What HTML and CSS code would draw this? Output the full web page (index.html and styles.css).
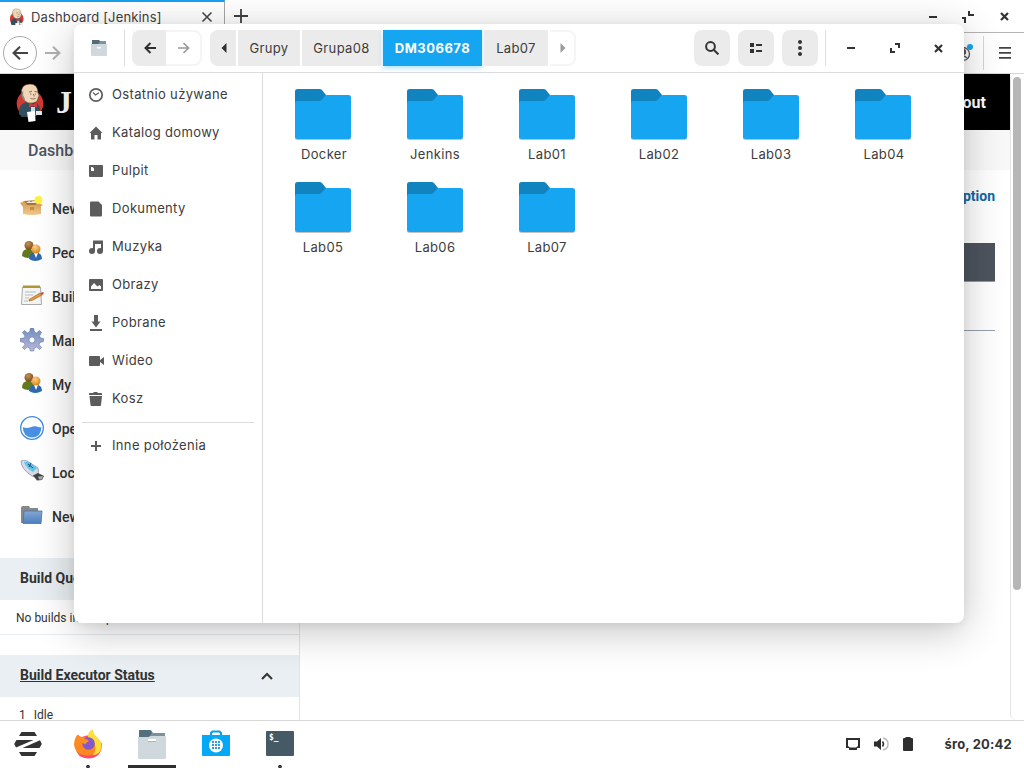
FILE: index.html
```html
<!DOCTYPE html>
<html lang="pl">
<head>
<meta charset="utf-8">
<title>Pulpit</title>
<link rel="stylesheet" href="styles.css">
</head>
<body>
<svg width="0" height="0" class="defs">
  <defs>
    <linearGradient id="cloth" x1="0" y1="0" x2="0" y2="1"><stop offset="0" stop-color="#84a9d6"/><stop offset="1" stop-color="#4b7fbd"/></linearGradient>
    <linearGradient id="box" x1="0" y1="0" x2="0" y2="1"><stop offset="0" stop-color="#dba660"/><stop offset="1" stop-color="#f2c88c"/></linearGradient>
    <linearGradient id="gear" x1="0" y1="0" x2="0" y2="1"><stop offset="0" stop-color="#6f8fbe"/><stop offset="1" stop-color="#b9b6dc"/></linearGradient>
    <linearGradient id="fox" x1="0.8" y1="0" x2="0.4" y2="1"><stop offset="0" stop-color="#ffe43a"/><stop offset=".45" stop-color="#ff9a1f"/><stop offset="1" stop-color="#ff4b47"/></linearGradient>
    <radialGradient id="brown" cx=".4" cy=".3" r=".7"><stop offset="0" stop-color="#c0935a"/><stop offset="1" stop-color="#7a4b12"/></radialGradient>
    <radialGradient id="amber" cx=".4" cy=".3" r=".7"><stop offset="0" stop-color="#ffd08a"/><stop offset="1" stop-color="#d9861c"/></radialGradient>
    <symbol id="folder" viewBox="0 0 56 51">
      <rect y="7" width="56" height="44" rx="2.5" fill="#c9c1bd"/>
      <path d="M0 14V2.500Q0 0 2.500 0H24.500Q26 0 27 1L31 6V14Z" fill="#1183bf"/>
      <path d="M0 14.500Q0 12 2.500 12H23.500Q25.500 12 26.500 11L30 7Q31 6 32 6H53.500Q56 6 56 8.500V47.500Q56 50 53.500 50H2.500Q0 50 0 47.500Z" fill="#16a5f1"/>
    </symbol>
    <symbol id="butler" viewBox="0 0 28 39">
      <ellipse cx="14" cy="20.500" rx="13.300" ry="13.500" fill="#d33833"/>
      <path d="M3 31Q2 23 8 20L14 18L21 20Q25 24 24 30L20 33L6 34Z" fill="#335061"/>
      <path d="M5.500 11Q4.500 1 14 1Q22 1 22 10Q24 13 22 15Q22 19 17 20Q12 21 9 18Q6 16 5.500 11Z" fill="#f0d6b7" stroke="#49311d" stroke-width=".5"/>
      <path d="M5.500 13Q5.500 9 7.500 8L7 12L9 16L8.500 18Z" fill="#8b8a85"/>
      <path d="M13 9l3-.7M18.500 8.500l2.500 .3M14 11h1.500M19 11h1M14.500 15.500q3 1 5 0M17.500 11l.8 2.500" stroke="#6d5846" stroke-width=".8" fill="none"/>
      <path d="M13 19.500l4 2 4-2v5l-4-1.500-4 1.500Z" fill="#d33833"/>
      <path d="M15 24h4v5h-4Z" fill="#c9dbe7"/>
      <path d="M11 29l8-1 .5 10-7 1Z" fill="#fff"/>
      <path d="M20 28h6v4h-6Z" fill="#e4e9ed"/>
    </symbol>
    <symbol id="people" viewBox="0 0 24 24">
      <path d="M2 16Q2 9 8 9Q14 9 14 16Q8 20 2 16Z" fill="#63791f"/>
      <circle cx="9" cy="5.500" r="4.500" fill="url(#brown)"/>
      <path d="M9 19Q9 13 15.500 12.500Q22 12.500 22 19Q15 23 9 19Z" fill="#2f68ad"/>
      <path d="M14 13h4l-2 5Z" fill="#fff"/>
      <circle cx="16" cy="9" r="4.500" fill="url(#amber)"/>
    </symbol>
  </defs>
</svg>

<div class="desktop">
  <div class="browser">
    <div class="tabbar">
      <div class="tab">
        <svg class="favicon" width="14" height="17" viewBox="1 0 27 32"><use href="#butler" width="28" height="39"/></svg>
        <span class="tab-title">Dashboard [Jenkins]</span>
        <svg width="12" height="12" viewBox="0 0 12 12" fill="none" stroke="#484848" stroke-width="1.600"><path d="M1.500 1.500l9 9M10.500 1.500l-9 9"/></svg>
      </div>
      <svg class="plus" width="14" height="14" viewBox="0 0 14 14" stroke="#404040" stroke-width="1.800"><path d="M7 0v14M0 7h14"/></svg>
      <div class="browser-controls">
        <svg width="8" height="13" viewBox="0 0 8 13"><path d="M0 6h8v2H0Z" fill="#333"/></svg>
        <svg width="13" height="13" viewBox="0 0 13 13" fill="none" stroke="#333" stroke-width="2"><path d="M8 1v4h5M1 8h3v5"/></svg>
        <svg width="9" height="9" viewBox="0 0 9 9" stroke="#333" stroke-width="2.200"><path d="M1 1l7 7M8 1l-7 7"/></svg>
      </div>
    </div>
    <div class="navbar">
      <div class="nav-back"><svg width="16" height="14" viewBox="0 0 16 14" fill="none" stroke="#444" stroke-width="2"><path d="M16 7H1.500M8 .7L1.500 7L8 13.300"/></svg></div>
      <svg width="16" height="14" viewBox="0 0 16 14" fill="none" stroke="#b2b2b2" stroke-width="2"><path d="M0 7h14.500M8 .7L14.500 7L8 13.300"/></svg>
      <div class="nav-tools">
        <svg width="20" height="20" viewBox="0 0 20 20" fill="none" stroke="#555" stroke-width="1.300"><circle cx="8" cy="11" r="6.500"/><circle cx="8" cy="9" r="2.500" fill="#555"/><path d="M4 15q4-4 8 0"/><circle cx="15" cy="4" r="3" fill="#16a5f1" stroke="none"/></svg>
        <span class="nav-sep"></span>
        <svg width="12" height="12" viewBox="0 0 12 12" fill="#444"><path d="M0 0h12v1.800H0ZM0 5h12v1.800H0ZM0 10h12v1.800H0Z"/></svg>
      </div>
    </div>
    <div class="viewport">
      <div class="page">
        <div class="masthead">
          <svg width="28" height="39" viewBox="0 0 28 39"><use href="#butler" width="28" height="39"/></svg>
          <span class="brand">Jenkins</span>
          <span class="logout">log out</span>
        </div>
        <div class="crumbs">Dashboard</div>
        <div class="content">
          <div class="side">
            <div class="tasks">
              <div class="task"><svg width="24" height="24" viewBox="0 0 24 24"><path d="M3 9H21V18Q12 20 3 18Z" fill="url(#box)"/><path d="M4 5L18 4L21 9H3Z" fill="#a67332"/><path d="M6 7q3-3 5-1q4-3 7 1Z" fill="#e9e5dc"/><path d="M0 7l4-2 3 4-4 2ZM23 9l-4 2-4-2 4-2Z" fill="#dba75f"/><path d="M10 11h4v3h-4Z" fill="#c88b45"/><circle cx="18.500" cy="4" r="4" fill="#fff23f"/></svg>New Item</div>
              <div class="task"><svg width="24" height="24"><use href="#people" width="24" height="24"/></svg>People</div>
              <div class="task"><svg width="24" height="24" viewBox="0 0 24 24"><path d="M2.500 3H20.500L21.500 20.500H1.500Z" fill="#f4f4f4" stroke="#aaa"/><path d="M3 1.500h17v2.500H3Z" fill="#a99a32"/><path d="M5 8h11M5 11h8M5 14h4M4 17h4" stroke="#bbb"/><path d="M9 15.500L20 9l2 2-10 5.500-3 .5Z" fill="#e49a3c" stroke="#9a631c" stroke-width=".6"/><path d="M20.500 9l3-1 0 2-1.500 1Z" fill="#d43d3d"/></svg>Build History</div>
              <div class="task"><svg width="24" height="24" viewBox="0 0 24 24"><path d="M10.500 0h3l1 4 2 1 3-2.500 2 2L19.500 8l1 2 3 .5v3l-3.500 1-1 2 2.500 3-2 2-3-2.500-2 1-1 3h-3l-1-3-2-1-3 2.500-2-2L5 16.500l-1-2-4-1v-3l4-.5 1-2L2.500 4.500l2-2L7.500 5l2-1Z" fill="url(#gear)" stroke="#6379a8" stroke-width=".6"/><circle cx="12" cy="12" r="3.200" fill="#fafafa" stroke="#7287b5"/></svg>Manage Jenkins</div>
              <div class="task"><svg width="24" height="24"><use href="#people" width="24" height="24"/></svg>My Views</div>
              <div class="task"><svg width="24" height="24" viewBox="0 0 24 24"><circle cx="12" cy="12" r="11.300" fill="#fff" stroke="#3f8ae0" stroke-width="1.300"/><path d="M2.800 11q3.500 1.500 7 .5q5-2 8.500-.5q2 .5 3 0Q21.500 21 12 21.500Q3 21 2.800 11Z" fill="#4a90e2"/></svg>Open Blue Ocean</div>
              <div class="task"><svg width="24" height="24" viewBox="0 0 24 24"><path d="M1 1Q3-1 7 1L18 8Q20 12 16 17L12 16Q1 9 1 1Z" fill="#d8dae4" stroke="#8d91a5" stroke-width=".8"/><path d="M4 2L9 2L17 8L13 12Q6 8 4 2Z" fill="#5ec4ef"/><path d="M8 4l5 4M11 3l-2 4" stroke="#174b77"/><path d="M13 15.500l5-2.500 6 3-2 4-5 .5Z" fill="#444"/><path d="M18 16.500l5-.5-1 3.500-3 0Z" fill="#aaa"/></svg>Lockable Resources</div>
              <div class="task"><svg width="24" height="24" viewBox="0 0 24 24"><path d="M1 4Q1 2 3 2H9L10 4H18V19H1Z" fill="#888"/><path d="M4 7H22L21 19.500H3Z" fill="url(#cloth)" stroke="#4775ad" stroke-width=".8"/></svg>New View</div>
            </div>
            <div class="pane-head">Build Queue</div>
            <div class="pane-empty">No builds in the queue.</div>
            <div class="pane-head executors"><span class="pane-link">Build Executor Status</span><svg width="12" height="8" viewBox="0 0 12 8" fill="none" stroke="#333" stroke-width="2"><path d="M1 7L6 2L11 7"/></svg></div>
            <div class="executor"><span>1</span><span>Idle</span></div>
          </div>
          <div class="main">
            <div class="add-desc">add description</div>
            <div class="job-head"></div>
            <div class="job-row"></div>
          </div>
        </div>
      </div>
      <div class="scrollbar"><div class="thumb"></div></div>
    </div>
  </div>

  <div class="files">
    <div class="files-bar">
      <svg class="app-icon" width="16" height="16" viewBox="0 0 16 16"><path d="M1 0h7l1 1h6v5H1Z" fill="#7d959f"/><path d="M1 0h7l1 2-2 2H1Z" fill="#536d7a"/><path d="M0 4h16v11q0 1-1 1H1q-1 0-1-1Z" fill="#cfd8dc"/><path d="M6 7h4v1.500H6Z" fill="#fff"/></svg>
      <span class="vsep"></span>
      <div class="history">
        <span class="seg on"><svg width="12" height="12" viewBox="0 0 12 12" fill="none" stroke="#2f2f2f" stroke-width="2"><path d="M12 6H1.500M6.500 1L1.500 6L6.500 11"/></svg></span>
        <span class="seg off"><svg width="12" height="12" viewBox="0 0 12 12" fill="none" stroke="#9a9a9a" stroke-width="1.700"><path d="M0 6h10.500M5.500 1l5 5-5 5"/></svg></span>
      </div>
      <div class="path">
        <span class="step arrow"><svg width="6" height="10" viewBox="0 0 6 10"><path d="M5.500 0v10L.5 5Z" fill="#2f2f2f"/></svg></span>
        <span class="step grupy">Grupy</span>
        <span class="step grupa">Grupa08</span>
        <span class="step current">DM306678</span>
        <span class="step lab">Lab07</span>
        <span class="step next"><svg width="6" height="10" viewBox="0 0 6 10"><path d="M.5 0v10L5.500 5Z" fill="#9c9c9c"/></svg></span>
      </div>
      <div class="actions">
        <span class="act"><svg width="14" height="14" viewBox="0 0 14 14" fill="none" stroke="#333" stroke-width="2"><circle cx="5.500" cy="5.500" r="4.400"/><path d="M8.700 8.700l4.700 4.700"/></svg></span>
        <span class="act"><svg width="12" height="10" viewBox="0 0 12 10" fill="#333"><path d="M0 0h4v4H0ZM6 1h6v2H6ZM0 6h4v4H0ZM6 7h6v2H6Z"/></svg></span>
        <span class="act"><svg width="4" height="16" viewBox="0 0 4 16" fill="#333"><circle cx="2" cy="2" r="2"/><circle cx="2" cy="8" r="2"/><circle cx="2" cy="14" r="2"/></svg></span>
      </div>
      <span class="vsep win-sep"></span>
      <div class="win-controls">
        <svg width="8" height="2" viewBox="0 0 8 2"><path d="M0 0h8v2H0Z" fill="#333"/></svg>
        <svg width="10" height="10" viewBox="0 0 10 10" fill="none" stroke="#333" stroke-width="2"><path d="M5 1h4v4M1 5v4h4"/></svg>
        <svg width="9" height="9" viewBox="0 0 9 9" stroke="#333" stroke-width="2.200"><path d="M1 1l7 7M8 1l-7 7"/></svg>
      </div>
    </div>
    <div class="files-body">
      <div class="places">
        <div class="place"><svg width="16" height="16" viewBox="0 0 16 16" fill="none" stroke="#5c5c5c"><circle cx="8" cy="8" r="6.200" stroke-width="1.700"/><path d="M5 5.500L7.500 8L11 5.700" stroke-width="1.100"/></svg><span>Ostatnio używane</span></div>
        <div class="place"><svg width="16" height="16" viewBox="0 0 16 16" fill="#5c5c5c"><path d="M8 1.500L1.500 8H3v6.500h3.500V10h3v4.500H13V8h1.500Z"/></svg><span>Katalog domowy</span></div>
        <div class="place"><svg width="16" height="16" viewBox="0 0 16 16" fill="#5c5c5c"><path fill-rule="evenodd" d="M2 2h12q1 0 1 1v10q0 1-1 1H2q-1 0-1-1V3q0-1 1-1ZM3 4v4h3V5.500L4.500 4Z"/></svg><span>Pulpit</span></div>
        <div class="place"><svg width="16" height="16" viewBox="0 0 16 16" fill="#5c5c5c"><path d="M3 .5h7.500L14 4v10q0 1.500-1 1.500H3q-1 0-1-1v-13q0-1 1-1Z"/></svg><span>Dokumenty</span></div>
        <div class="place"><svg width="16" height="16" viewBox="0 0 16 16" fill="#5c5c5c"><path d="M5 1.500h10V12h-2V5H7v7H5Z"/><circle cx="4" cy="12" r="3"/><circle cx="12" cy="12" r="3"/></svg><span>Muzyka</span></div>
        <div class="place"><svg width="16" height="16" viewBox="0 0 16 16" fill="#5c5c5c"><path fill-rule="evenodd" d="M2 2h12q1 0 1 1v10q0 1-1 1H2q-1 0-1-1V3q0-1 1-1ZM3 12h10V9.500L11.500 8 9.500 9.500 6 6 3 9.500Z"/></svg><span>Obrazy</span></div>
        <div class="place"><svg width="16" height="16" viewBox="0 0 16 16" fill="#5c5c5c"><path d="M6 0h4v6.500h2.500L8 12.500 3.500 6.500H6ZM2 14h12v2H2Z"/></svg><span>Pobrane</span></div>
        <div class="place"><svg width="16" height="16" viewBox="0 0 16 16" fill="#5c5c5c"><path d="M2 3h9q1 0 1 1v3l4-3v8l-4-3v3q0 1-1 1H2q-1 0-1-1V4q0-1 1-1Z"/></svg><span>Wideo</span></div>
        <div class="place"><svg width="16" height="16" viewBox="0 0 16 16" fill="#5c5c5c"><path d="M1 4V3q0-1 1-1h3l1-1h3l1 1h3q1 0 1 1v1ZM1.500 5H14l-1 9q0 1-1 1H3.500q-1 0-1-1Z"/></svg><span>Kosz</span></div>
        <div class="divider"></div>
        <div class="place"><svg width="16" height="16" viewBox="0 0 16 16" fill="#5c5c5c"><path d="M7 3h2v4h4v2H9v4H7V9H3V7h4Z"/></svg><span>Inne położenia</span></div>
      </div>
      <div class="icons">
        <div class="item"><svg width="56" height="51"><use href="#folder" width="56" height="51"/></svg><span class="nudge">Docker</span></div>
        <div class="item"><svg width="56" height="51"><use href="#folder" width="56" height="51"/></svg><span>Jenkins</span></div>
        <div class="item"><svg width="56" height="51"><use href="#folder" width="56" height="51"/></svg><span>Lab01</span></div>
        <div class="item"><svg width="56" height="51"><use href="#folder" width="56" height="51"/></svg><span>Lab02</span></div>
        <div class="item"><svg width="56" height="51"><use href="#folder" width="56" height="51"/></svg><span>Lab03</span></div>
        <div class="item"><svg width="56" height="51"><use href="#folder" width="56" height="51"/></svg><span class="nudge">Lab04</span></div>
        <div class="item"><svg width="56" height="51"><use href="#folder" width="56" height="51"/></svg><span>Lab05</span></div>
        <div class="item"><svg width="56" height="51"><use href="#folder" width="56" height="51"/></svg><span>Lab06</span></div>
        <div class="item"><svg width="56" height="51"><use href="#folder" width="56" height="51"/></svg><span>Lab07</span></div>
      </div>
    </div>
  </div>

  <div class="taskbar">
    <div class="launch zorin"><svg width="28" height="24" viewBox="0 0 28 24" fill="#333"><path d="M7.500 0h13l2.500 4H5ZM5 20h18l-2.500 4h-13ZM2.500 8H19.500L2 15.500.2 12ZM26 8.300L27.800 12 25.500 16H8.500Z"/></svg></div>
    <div class="launch dot"><svg width="30" height="30" viewBox="0 0 30 30"><path d="M3 10Q0 29 15 29.500Q29 29 29 15Q22 4 12 7Z" fill="#ff496d"/><path d="M1 15Q2 7 5 5.500Q7 8 10 8L24 12L27 19Q22 27 14 26.500Q2 26 1 15Z" fill="#ff8820"/><path d="M15 7Q15 2 20 .5Q20 5 24 8Q29 13 28.500 18Q27 26 20 26Q25 19 20 12Q14 11 15 7Z" fill="#ffdd3b"/><circle cx="15.500" cy="14.500" r="6.300" fill="#8259cc"/><path d="M4 10Q8 7.500 11 10Q15 10 16 12Q13 13 12.500 15.500Q10 13 5 14.500Z" fill="#ff8f22"/><path d="M9 13Q8 20 15 21.500Q19 22 22 19Q20 26 13 25Q6 23 6 13Z" fill="#ff8820"/></svg></div>
    <div class="launch active"><svg width="28" height="30" viewBox="0 0 28 30"><path d="M1 0h12l2 3h12v8H1Z" fill="#7a929d"/><path d="M1 1q0-1 1-1h10l2 3-3 4H1Z" fill="#53707c"/><path d="M0 7h9.500q2 0 3-1H27q1 0 1 1v21q0 1-1 1H1q-1 0-1-1Z" fill="#cfd8dc"/><path d="M10 9h8v3h-8Z" fill="#fff"/><path d="M10 11h8v1h-8Z" fill="#aab6bb"/></svg></div>
    <div class="launch store"><svg width="28" height="27" viewBox="0 0 28 27"><path d="M9 6V3L10.500 1.500h7L19 3V6" fill="none" stroke="#08a0f0" stroke-width="2.200"/><path d="M0 5h28v20q0 1-1 1H1q-1 0-1-1Z" fill="#03a9f4"/><circle cx="14" cy="15.500" r="7" fill="#fff"/><path d="M10 11h2v2h-2ZM13 11h2v2h-2ZM16 11h2v2h-2ZM10 14h2v2h-2ZM13 14h2v2h-2ZM16 14h2v2h-2ZM10 17h2v2h-2ZM13 17h2v2h-2ZM16 17h2v2h-2Z" fill="#2c9fe0"/></svg></div>
    <div class="launch dot"><div class="term">$_</div></div>
    <div class="tray">
      <svg width="14" height="12" viewBox="0 0 14 12"><path fill-rule="evenodd" d="M0 0h14v10h-3v2H3v-2H0ZM2 2v6l2 1.500h6L12 8V2Z" fill="#2e2e2e"/></svg>
      <svg width="15" height="14" viewBox="0 0 15 14" fill="none"><path d="M0 4.500h3L7 1v12L3 9.500H0Z" fill="#2e2e2e"/><path d="M8.500 4.500q2 2.500 0 5" stroke="#333" stroke-width="1.500"/><path d="M9 1q5 1 5 6t-5 6" stroke="#bbb" stroke-width="1.500"/></svg>
      <svg width="10" height="14" viewBox="0 0 10 14"><path d="M2.500 0h5v1H9q1 0 1 1v11q0 1-1 1H1q-1 0-1-1V2q0-1 1-1h1.500Z" fill="#2e2e2e"/></svg>
      <span class="clock">śro, 20:42</span>
    </div>
  </div>
</div>
</body>
</html>
```
FILE: styles.css
```css
* { box-sizing: border-box; }
body { margin: 0; font-family: Inter, "Noto Sans", sans-serif; font-size: 13px; color: #3c3c3c; }
svg { display: block; flex: none; }
.defs { position: absolute; }
.desktop { position: relative; width: 1024px; height: 768px; overflow: hidden; display: flex; flex-direction: column; background: #fff; }

/* browser */
.browser { flex: 1; min-height: 0; display: flex; flex-direction: column; }
.tabbar { height: 33px; display: flex; align-items: flex-start; border-bottom: 1px solid #b5b5b5; background: #fff; }
.tab { width: 225px; height: 33px; padding: 0 11px 2px 9px; display: flex; align-items: center; border-top: 2px solid #16a0ee; border-right: 1px solid #a5a5a5; background: #fff; }
.favicon { margin-left: 1px; }
.tab-title { flex: 1; margin-left: 7px; padding-top: 1px; font-size: 13px; letter-spacing: .15px; color: #404040; white-space: nowrap; }
.plus { margin: 9px 0 0 9px; }
.browser-controls { margin: 10px 15px 0 auto; display: flex; align-items: center; gap: 25px; }
.browser-controls svg:nth-child(2) { margin: 0 1px 0 -1px; }
.navbar { height: 41px; padding: 0 13px 0 3px; display: flex; align-items: center; gap: 8px; border-bottom: 1px solid #d6d6d6; }
.nav-back { width: 34px; height: 34px; display: flex; align-items: center; justify-content: center; border: 1px solid #a9a9a9; border-radius: 50%; }
.nav-tools { margin-left: auto; display: flex; align-items: center; gap: 8px; }
.nav-sep { width: 1px; height: 34px; margin-right: 7px; background: #d5d5d5; }
.viewport { flex: 1; min-height: 0; display: flex; }
.page { width: 1010px; display: flex; flex-direction: column; font-family: Roboto, sans-serif; overflow: hidden; }
.masthead { height: 56px; flex: none; padding: 0 24px 0 16px; display: flex; align-items: center; background: #000; color: #fff; }
.brand { margin-left: 12px; font: bold 32px "Liberation Serif", serif; letter-spacing: 2px; }
.logout { margin-left: auto; font-size: 16px; font-weight: 700; }
.crumbs { height: 40px; flex: none; padding-left: 28px; line-height: 41px; font-size: 16px; font-weight: 500; color: #4d545d; background: #f8f8f8; }
.content { flex: 1; min-height: 0; display: flex; }
.side { width: 300px; border-right: 1px solid #e4e4e4; }
.tasks { height: 388px; padding-top: 17px; }
.task { height: 44px; padding-left: 20px; display: flex; align-items: center; gap: 8px; font-size: 14px; font-weight: 500; color: #333; }
.task svg { margin-top: -2px; }
.pane-head { height: 42px; padding: 0 26px 2px 20px; display: flex; align-items: center; justify-content: space-between; background: #e9eff2; font-size: 14px; font-weight: 700; color: #333; }
.pane-head svg { margin-top: 2px; }
.pane-empty { height: 35px; padding-left: 16px; line-height: 36px; font-size: 12px; border-bottom: 1px solid #e6ecef; color: #333; }
.executors { margin-top: 20px; }
.pane-link { text-decoration: underline; }
.executor { padding: 11px 0 0 19px; display: flex; gap: 8px; font-size: 12px; color: #333; }
.main { flex: 1; padding: 16px 15px 0 16px; }
.add-desc { height: 57px; line-height: 20px; text-align: right; font-size: 14px; font-weight: 700; color: #1268a3; }
.job-head { height: 39px; background: #4d545d; border-bottom: 1px solid #8f9da6; }
.job-row { height: 49px; border-bottom: 1px solid #94a1aa; }
.scrollbar { width: 14px; padding: 3px 2px 0 1px; border-left: 1px solid #e4e4e4; border-radius: 6px; }
.thumb { width: 8px; height: 513px; margin-left: 1px; border-radius: 4px; background: #b6b6b6; }

/* file manager */
.files { position: absolute; left: 74px; top: 24px; width: 890px; height: 599px; display: flex; flex-direction: column; border-radius: 8px; overflow: hidden; background: #fff; box-shadow: 0 8px 40px rgba(0,0,0,.24), 0 2px 8px rgba(0,0,0,.06); }
.files-bar { height: 49px; flex: none; padding-left: 17px; display: flex; align-items: center; border-bottom: 1px solid #dcdcdc; }
.vsep { width: 1px; height: 36px; background: #dedede; }
.app-icon + .vsep { margin: 0 7px 0 17px; }
.history, .path { height: 36px; display: flex; }
.path { margin-left: 8px; gap: 2px; }
.seg, .step, .act { display: flex; align-items: center; justify-content: center; background: #ebebeb; }
.seg.on { width: 34px; padding-left: 2px; border-radius: 8px 0 0 8px; }
.seg.off { width: 36px; padding-left: 2px; background: #fff; border: 2px solid #f5f5f5; border-left: 0; border-radius: 0 8px 8px 0; }
.step { letter-spacing: .35px; padding-bottom: 1px; }
.arrow { width: 26px; padding: 0 0 0 2px; border-radius: 8px 0 0 8px; }
.grupy { width: 62px; }
.grupa { width: 79px; }
.step.current { width: 99px; background: #16a5f1; color: #fff; font-weight: 700; letter-spacing: .5px; box-shadow: 0 2px 5px rgba(22,165,241,.35); }
.lab { width: 64px; }
.next { width: 26px; padding: 0 0 0 1px; background: #fff; border: 2px solid #f5f5f5; border-left: 0; border-radius: 0 8px 8px 0; }
.actions { margin-left: auto; display: flex; gap: 8px; }
.act { width: 36px; height: 36px; border-radius: 8px; }
.win-sep { margin-left: 7px; }
.win-controls { width: 138px; padding: 0 21px; display: flex; align-items: center; justify-content: space-between; }
.files-body { flex: 1; min-height: 0; display: flex; }
.places { width: 189px; padding-top: 3px; border-right: 1px solid #dcdcdc; }
.place { height: 38px; padding-left: 14px; display: flex; align-items: center; gap: 8px; letter-spacing: .35px; white-space: nowrap; }
.place span { padding-bottom: 2px; }
.divider { height: 1px; margin: 4px 8px; background: #dcdcdc; }
.icons { display: grid; grid-template-columns: repeat(6, 112px); grid-auto-rows: 93px; align-content: start; padding: 16px 0 0 4px; }
.item { display: flex; flex-direction: column; align-items: center; gap: 6px; line-height: 17px; letter-spacing: .35px; }
.nudge { padding-left: 2px; }

/* panel */
.taskbar { position: relative; height: 48px; flex: none; display: flex; border-top: 1px solid #d8d8d8; background: #fff; }
.launch { position: relative; width: 48px; margin-right: 16px; padding-bottom: 2px; display: flex; align-items: center; justify-content: center; }
.zorin { width: 48px; margin: 0 12px 0 4px; }
.dot::after { content: ""; position: absolute; left: 22px; bottom: 0; width: 4px; height: 3px; border-radius: 2px; background: #333; }
.active { border-bottom: 3px solid #2f2f2f; padding: 3px 0 0; }
.term { width: 28px; height: 25px; padding: 2px 3px; border-radius: 1px; background: #455a64; color: #fff; font: bold 8px/10px "DejaVu Sans Mono", monospace; }
.tray { margin-left: auto; padding: 0 12px 2px 0; display: flex; align-items: center; gap: 14px; }
.clock { margin-left: 17px; font-weight: 700; letter-spacing: .2px; color: #333; }
```
